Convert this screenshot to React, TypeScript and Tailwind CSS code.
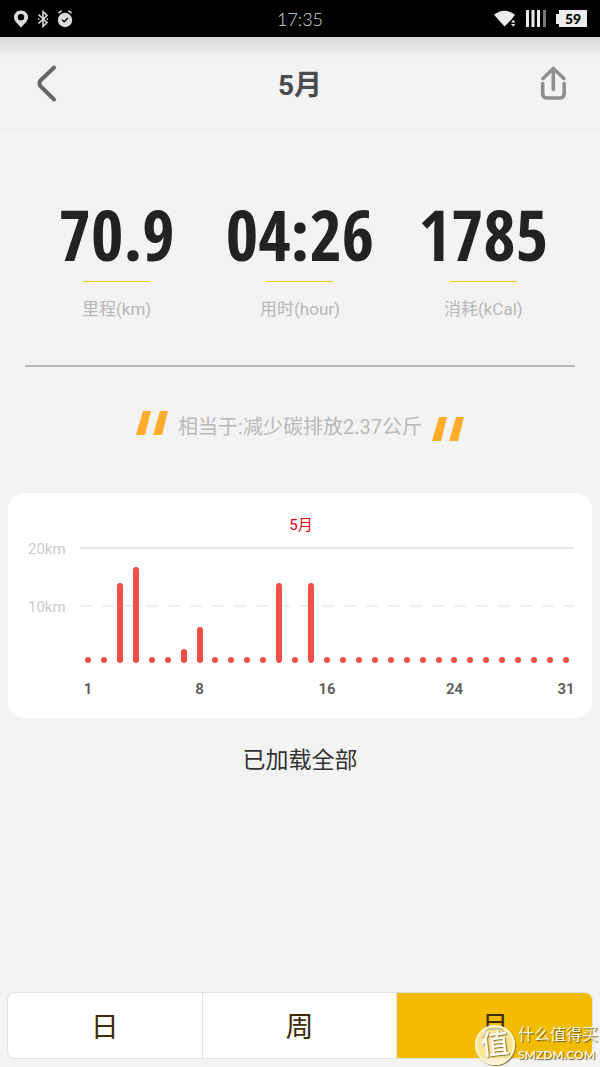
import React, { useState } from "react";
import clsx from "clsx";

const stats = [
  { value: "70.9", label: "里程(km)" },
  { value: "04:26", label: "用时(hour)" },
  { value: "1785", label: "消耗(kCal)" },
];

const tabs = ["日", "周", "月"];

const MAX_KM = 20;
const DAYS = 31;
const distances: Record<number, number> = {
  3: 13.8,
  4: 16.6,
  7: 2.4,
  8: 6.2,
  13: 13.8,
  15: 13.8,
};
const labelledDays = [1, 8, 16, 24, 31];
const days = Array.from({ length: DAYS }, (_, i) => i + 1);

function StatusBar() {
  return (
    <div className="grid h-[37px] grid-cols-3 items-center bg-black px-3 text-[#dcdcdc]">
      <div className="flex items-center gap-1.5">
        <svg className="h-[18px] w-[18px]" viewBox="0 0 18 18" fill="currentColor">
          <path
            fillRule="evenodd"
            d="M9 .5C5 .5 2 3.400 2 7.200c0 3.800 3.500 6.500 7 10.300 3.500-3.800 7-6.500 7-10.300C16 3.400 13 .5 9 .5zM9 4a3.200 3.200 0 1 1 0 6.400A3.200 3.200 0 0 1 9 4z"
          />
        </svg>
        <svg
          className="h-[18px] w-[14px]"
          viewBox="0 0 14 18"
          fill="none"
          stroke="currentColor"
          strokeWidth="1.6"
        >
          <path d="M2.500 4.500l8.500 8-4 3.800V1.700l4 3.800-8.500 8" />
          <path d="M2 9h1.500M10.500 9H12" />
        </svg>
        <svg className="h-[18px] w-[18px]" viewBox="0 0 18 18">
          <circle cx="9" cy="10" r="7.200" fill="currentColor" />
          <path
            d="M2.600 3.400Q3.600 1.500 5.800 1M15.400 3.400Q14.400 1.500 12.200 1"
            fill="none"
            stroke="currentColor"
            strokeWidth="1.600"
          />
          <path d="M6.200 9.800l2 2 3.800-3.800" fill="none" stroke="#000" strokeWidth="1.300" />
        </svg>
      </div>
      <div className="text-center font-[Lato,sans-serif] text-lg font-light">17:35</div>
      <div className="flex items-center justify-end gap-2.5">
        <svg className="h-[18px] w-[22px]" viewBox="0 0 22 18" fill="#ececec">
          <path d="M0 4.800Q10.500-3.200 21 4.800L17.300 9.800 15.500 11.500 10.500 16.500z" />
          <path d="M17 12.500l2.200-2.700 2.200 2.700zM17 14l2.200 2.700 2.200-2.700z" />
        </svg>
        <svg className="h-[17px] w-5" viewBox="0 0 20 17" fill="#ececec">
          <path d="M0 0h3v17H0zM5.500 0h3v17h-3zM11 0h3v17h-3z" />
          <path d="M17 0h3v17h-3z" fill="#777" />
        </svg>
        <div className="flex items-center pr-px">
          <div className="h-2.5 w-[3px] bg-[#ececec]" />
          <div className="flex h-[17px] w-7 items-center justify-center bg-[#ececec] font-[Lato,sans-serif] text-sm font-black text-black">
            59
          </div>
        </div>
      </div>
    </div>
  );
}

function Header() {
  return (
    <header className="flex h-[93px] items-center justify-between border-b border-[#e9e9e9] bg-[linear-gradient(to_bottom,#d9d9d9,#f3f3f3_22px)] px-8">
      <button type="button" aria-label="返回" className="flex h-10 w-7 items-center justify-center">
        <svg
          className="h-10 w-7"
          viewBox="0 0 28 40"
          fill="none"
          stroke="#666"
          strokeWidth="4"
          strokeLinecap="round"
          strokeLinejoin="round"
        >
          <path d="M22 4.500L8.500 17.500Q6.200 20.500 8.500 23.200L22 36.500" />
        </svg>
      </button>
      <h1 className="pt-1.5 text-[28px] font-bold text-[#4a4b4f]">5月</h1>
      <button type="button" aria-label="分享" className="flex h-10 w-7 items-center justify-center">
        <svg
          className="h-10 w-7"
          viewBox="0 0 28 40"
          fill="none"
          stroke="#8c9093"
          strokeWidth="3.600"
          strokeLinecap="round"
          strokeLinejoin="round"
        >
          <path d="M3 15.500L13.300 5.500 24 15.500M13.300 5.500v21" />
          <path d="M2.700 20.500v10q0 4.500 4.500 4.500h12.500q4.500 0 4.500-4.500v-10" />
        </svg>
      </button>
    </header>
  );
}

function Quote({ className }: { className: string }) {
  return (
    <svg className={clsx("h-6 w-8", className)} viewBox="0 0 32 24" fill="#ffab2b">
      <path d="M7 0h8L9 24H0zM24 0h8L26 24H17z" />
    </svg>
  );
}

function MonthChart() {
  return (
    <section className="mx-2 rounded-2xl bg-white pt-5 pr-[18px] pb-[17px] pl-5">
      <h2 className="text-center text-[15px] leading-6 text-[#e60012]">5月</h2>
      <div className="mt-2.5 flex">
        <div className="flex w-[52px] flex-col gap-[34px] text-[15px] leading-6 text-[#cbcbcb]">
          <span className="-mt-2.5">20km</span>
          <span>10km</span>
        </div>
        <div className="flex-1">
          <div className="relative h-[116px]">
            <div className="absolute inset-x-0 top-0 h-0.5 bg-[#e8e8e8]" />
            <div className="absolute inset-x-0 top-1/2 h-0.5 bg-[repeating-linear-gradient(to_right,#f0f0f0_0,#f0f0f0_12px,transparent_12px,transparent_22px)]" />
            <div className="relative grid h-full grid-cols-[repeat(31,minmax(0,1fr))] items-end justify-items-center">
              {days.map((day) => (
                <div
                  key={day}
                  className="min-h-1.5 w-1.5 rounded-full bg-[#f25048]"
                  style={{ height: `${((distances[day] ?? 0) / MAX_KM) * 100}%` }}
                />
              ))}
            </div>
          </div>
          <div className="mt-3.5 grid h-6 grid-cols-[repeat(31,minmax(0,1fr))]">
            {days.map((day) => (
              <span
                key={day}
                className="flex justify-center text-[15px] leading-6 font-semibold whitespace-nowrap text-[#5a5a5a]"
              >
                {labelledDays.includes(day) && day}
              </span>
            ))}
          </div>
        </div>
      </div>
    </section>
  );
}

function Watermark() {
  return (
    <div className="pointer-events-none absolute right-[3px] bottom-0.5 flex items-center gap-[3px] text-[#fff6d8] [text-shadow:1px_1px_1px_#6b5a2a]">
      <div className="flex h-10 w-10 items-center justify-center rounded-full border-2 border-[#fff6d8] bg-[#fff1c4]/75 shadow-[1px_1px_1px_#8a7434]">
        <span className="-rotate-6 text-[28px] leading-8 font-medium text-[#fffdf0]">值</span>
      </div>
      <div className="flex w-[79px] flex-col whitespace-nowrap">
        <span className="text-base leading-5">什么值得买</span>
        <span className="font-[Lato,sans-serif] text-xs leading-5 font-bold">SMZDM.COM</span>
      </div>
    </div>
  );
}

export default function App() {
  const [active, setActive] = useState("月");

  return (
    <div className="relative flex min-h-screen flex-col bg-[#f3f3f3] font-[Roboto,'Noto_Sans_CJK_SC',sans-serif]">
      <StatusBar />
      <Header />

      {/* Totals */}
      <div className="mx-[25px] grid grid-cols-3 border-b-2 border-[#b9b9b9] pt-16 pb-11">
        {stats.map((stat) => (
          <div key={stat.label} className="flex flex-col items-center">
            <div className="font-['Noto_Sans_ExtraCondensed','Open_Sans_Condensed','Roboto_Condensed',Roboto,sans-serif] text-[70px] leading-20 font-bold text-[#222]">
              {stat.value}
            </div>
            <div className="mt-[7px] h-px w-[67px] bg-[#f0d000]" />
            <div className="mt-[15px] text-[17px] leading-6 text-[#b7b7b7]">{stat.label}</div>
          </div>
        ))}
      </div>

      <div className="mt-10 flex h-[38px] items-center justify-center gap-2.5">
        <Quote className="mt-1 self-start" />
        <p className="pt-0.5 text-xl text-[#b9b9b9]">相当于:减少碳排放2.37公斤</p>
        <Quote className="mb-1 self-end" />
      </div>

      <div className="mt-12">
        <MonthChart />
      </div>

      <p className="mt-[25px] text-center text-[23px] leading-9 text-[#333]">已加载全部</p>

      {/* Range switch */}
      <div className="mx-[7px] mt-auto mb-2 grid h-[67px] grid-cols-3 overflow-hidden rounded-lg border border-[#e2e2e2] bg-white">
        {tabs.map((tab) => (
          <button
            key={tab}
            type="button"
            aria-pressed={active === tab}
            onClick={() => setActive(tab)}
            className={clsx(
              "border-r border-[#e2e2e2] pt-1 text-[28px] text-[#3d2c05] last:border-r-0",
              active === tab && "bg-[#f2bc00]",
            )}
          >
            {tab}
          </button>
        ))}
      </div>

      <Watermark />
    </div>
  );
}
